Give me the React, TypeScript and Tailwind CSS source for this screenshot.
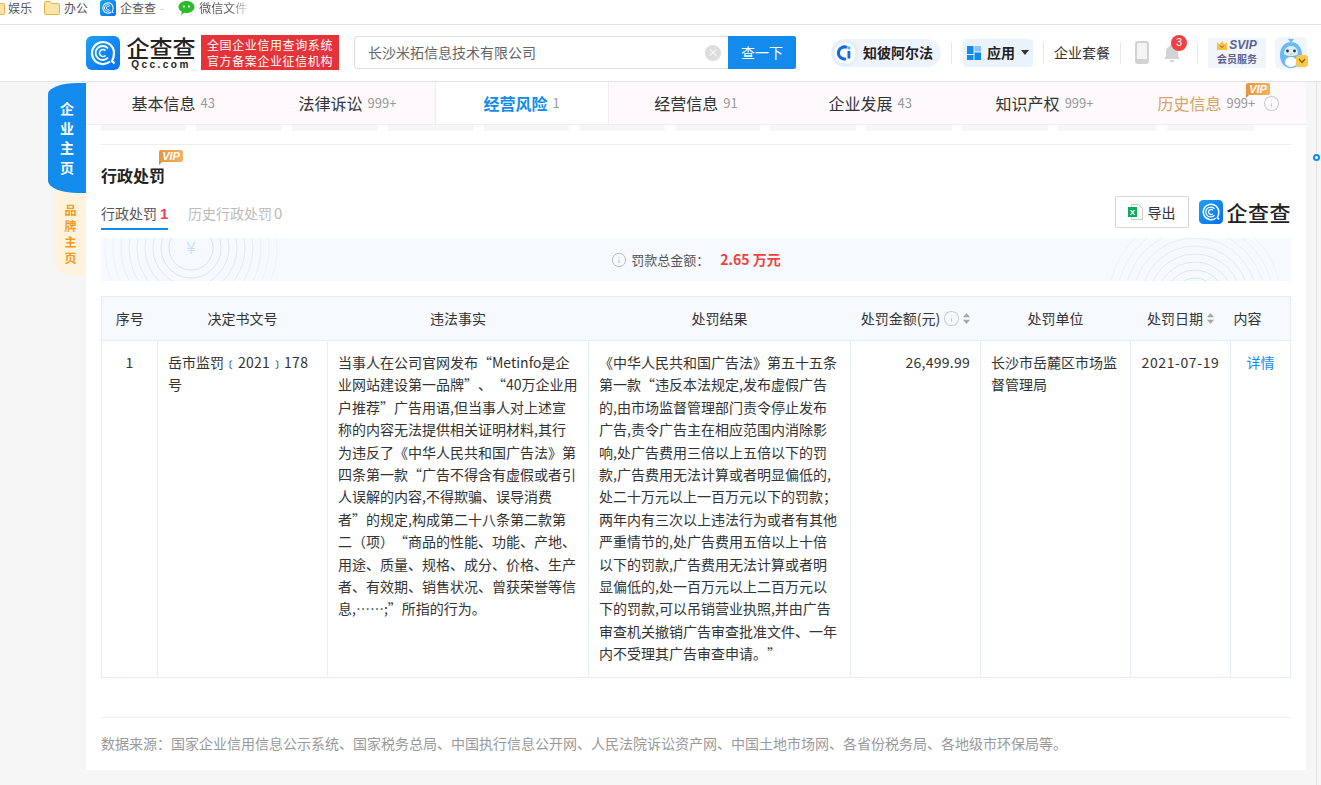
import React from 'react'
import { Info } from 'lucide-react'

const tabs = [
  { name: '基本信息', count: '43' },
  { name: '法律诉讼', count: '999+' },
  { name: '经营风险', count: '1', active: true },
  { name: '经营信息', count: '91' },
  { name: '企业发展', count: '43' },
  { name: '知识产权', count: '999+' },
  { name: '历史信息', count: '999+', vip: true },
]

const stubWidths = [85, 86, 86, 86, 85, 86, 85, 86, 86, 86, 99, 87]

const factText =
  '当事人在公司官网发布“Metinfo是企业网站建设第一品牌”、“40万企业用户推荐”广告用语,但当事人对上述宣称的内容无法提供相关证明材料,其行为违反了《中华人民共和国广告法》第四条第一款“广告不得含有虚假或者引人误解的内容,不得欺骗、误导消费者”的规定,构成第二十八条第二款第二（项）“商品的性能、功能、产地、用途、质量、规格、成分、价格、生产者、有效期、销售状况、曾获荣誉等信息,……;”所指的行为。'

const resultText =
  '《中华人民共和国广告法》第五十五条第一款“违反本法规定,发布虚假广告的,由市场监督管理部门责令停止发布广告,责令广告主在相应范围内消除影响,处广告费用三倍以上五倍以下的罚款,广告费用无法计算或者明显偏低的,处二十万元以上一百万元以下的罚款；两年内有三次以上违法行为或者有其他严重情节的,处广告费用五倍以上十倍以下的罚款,广告费用无法计算或者明显偏低的,处一百万元以上二百万元以下的罚款,可以吊销营业执照,并由广告审查机关撤销广告审查批准文件、一年内不受理其广告审查申请。”'

const QccIcon = ({ size }: { size: number }) => (
  <svg width={size} height={size} viewBox="0 0 34 34" className="shrink-0">
    <defs>
      <linearGradient id="qcc" x1="0" y1="0" x2="1" y2="1">
        <stop offset="0" stopColor="#1aa3f5" />
        <stop offset="1" stopColor="#0a6ff0" />
      </linearGradient>
    </defs>
    <rect width="34" height="34" rx="6" fill="url(#qcc)" />
    <path d="M24 25.5A11 11 0 1 1 28 17c0 4-1 6.5-2 8l2.5 2.5" fill="none" stroke="#fff" strokeWidth="2.2" />
    <path d="M22 21.500A7 7 0 1 1 22 12.500" fill="none" stroke="#fff" strokeWidth="1.8" />
    <path d="M19.500 19.500A3.500 3.500 0 1 1 19.500 14.500" fill="none" stroke="#fff" strokeWidth="1.6" />
  </svg>
)

const Folder = () => (
  <svg width="16" height="14" viewBox="0 0 16 14" className="shrink-0">
    <path d="M.5 2A1.500 1.500 0 0 1 2 .5h4L7.500 2.500H14A1.500 1.500 0 0 1 15.500 4v8A1.500 1.500 0 0 1 14 13.500H2A1.500 1.500 0 0 1 .5 12Z" fill="#ffe6a8" stroke="#e8b04a" />
  </svg>
)

const WeChat = () => (
  <svg width="17" height="16" viewBox="0 0 17 16" className="shrink-0">
    <path d="M8.500 1C4 1 .5 3.700.5 7c0 2 1.300 3.700 3.200 4.800L3.200 15l3.100-2.200c.7.100 1.400.2 2.200.2 4.500 0 8-2.700 8-6s-3.500-6-8-6Z" fill="#2dbb2d" />
    <circle cx="6" cy="6.500" r="1.100" fill="#fff" />
    <circle cx="11" cy="6.500" r="1.100" fill="#fff" />
  </svg>
)

const VipTag = () => (
  <span className="relative flex h-[12px] w-[24px] items-center justify-center rounded-[2px] rounded-bl-none bg-gradient-to-r from-[#e8963a] to-[#f4b163] font-['Liberation_Sans',sans-serif] text-[11px] font-bold italic leading-none text-white">
    VIP
    <span className="absolute left-0 top-full h-0 w-0 border-r-[3px] border-t-[3px] border-r-transparent border-t-[#d98730]" />
  </span>
)

const SortArrows = () => (
  <svg width="7" height="11" viewBox="0 0 7 11" className="shrink-0">
    <path d="M3.500 0 7 4.300H0Z" fill="#a8a8a8" />
    <path d="M3.500 11 0 6.700h7Z" fill="#a8a8a8" />
  </svg>
)

const Rings = ({ className, yen }: { className: string; yen?: boolean }) => (
  <svg viewBox="0 0 180 180" width="180" height="180" className={className}>
    {[22, 30, 38, 46, 54, 62, 70, 78, 86].map((r) => (
      <circle key={r} cx="90" cy="90" r={r} fill="none" stroke="#d5e4f9" strokeWidth="1" opacity={1.25 - r / 90} />
    ))}
    {yen && (
      <text x="90" y="96" fontSize="16" fill="#cfe0f8" textAnchor="middle" fontFamily="Liberation Sans">¥</text>
    )}
  </svg>
)

const Divider = ({ className }: { className: string }) => (
  <span className={`h-[22px] w-px shrink-0 bg-[#e8e8e8] ${className}`} />
)

export default function App() {
  return (
    <div className="relative h-[785px] w-[1321px] overflow-hidden bg-[#f6f6f6] font-['Noto_Sans_CJK_SC','Liberation_Sans',sans-serif] text-[14px] text-[#333] [text-spacing-trim:space-all]">
      {/* bookmarks bar */}
      <div className="box-border flex h-[25px] items-center overflow-hidden border-b border-[#e4e4e4] bg-white pb-[8px] text-[12px] text-[#555]">
        <div className="ml-[-11px] flex items-center gap-[3px]">
          <Folder />
          <span>娱乐</span>
        </div>
        <div className="ml-[12px] flex items-center gap-[4px]">
          <Folder />
          <span>办公</span>
        </div>
        <div className="ml-[12px] flex items-center gap-[4px]">
          <QccIcon size={16} />
          <span>企查查</span>
          <span className="text-[#ccc]">-</span>
        </div>
        <div className="ml-[14px] flex items-center gap-[4px]">
          <WeChat />
          <span className="bg-gradient-to-r from-[#555] from-60% to-[#ddd] bg-clip-text text-transparent">微信文件</span>
        </div>
      </div>

      {/* header */}
      <header className="box-border flex h-[57px] items-center border-b border-[#e4e4e4] bg-white pb-[1px] pl-[86px]">
        <QccIcon size={34} />
        <div className="ml-[6px] flex w-[70px] flex-col items-center">
          <span className="whitespace-nowrap text-[23px] font-medium leading-[24px] text-[#222]">企查查</span>
          <span className="whitespace-nowrap font-['Liberation_Sans',sans-serif] text-[10px] font-bold leading-[11px] tracking-[2.5px] text-[#222]">Qcc.com</span>
        </div>
        <div className="ml-[5px] flex h-[35px] w-[138px] flex-col items-center justify-center bg-[#e5333a] text-[12px] leading-[16px] tracking-[0.6px] text-white">
          <span>全国企业信用查询系统</span>
          <span>官方备案企业征信机构</span>
        </div>
        <div className="ml-[15px] flex h-[33px] w-[442px]">
          <div className="flex flex-1 items-center justify-between rounded-l-[4px] border border-r-0 border-[#ddd] pl-[13px] pr-[7px] text-[#666]">
            <span>长沙米拓信息技术有限公司</span>
            <span className="flex h-[16px] w-[16px] items-center justify-center rounded-full bg-[#ddd] text-[11px] leading-none text-white">×</span>
          </div>
          <button className="w-[68px] rounded-r-[2px] bg-[#128bed] text-white">查一下</button>
        </div>
        <div className="ml-[35px] flex h-[28px] w-[110px] items-center rounded-full bg-[#eef4fd]">
          <svg width="28" height="28" viewBox="0 0 28 28" className="shrink-0">
            <circle cx="14" cy="14" r="13.500" fill="#e4eefc" />
            <circle cx="14" cy="14" r="10.500" fill="#fff" />
            <path d="M16 8.500A6 6 0 1 0 15 19.700" fill="none" stroke="#1268e8" strokeWidth="3" />
            <rect x="16.500" y="12" width="2.800" height="7.500" fill="#1268e8" />
            <rect x="16.500" y="7.500" width="2.800" height="3" fill="#29c3ee" />
          </svg>
          <span className="ml-[4px] text-[14px] font-bold text-[#222]">知彼阿尔法</span>
        </div>
        <Divider className="ml-[10px]" />
        <div className="ml-[11px] flex h-[28px] w-[70px] items-center rounded-[4px] bg-[#eaf3fd] pl-[4px]">
          <svg width="14" height="14" viewBox="0 0 14 14" className="shrink-0">
            <rect width="6.500" height="8" fill="#128bed" />
            <rect x="7.500" width="6.500" height="5.500" fill="#128bed" opacity="0.45" />
            <rect y="9" width="6.500" height="5" fill="#128bed" />
            <rect x="7.500" y="6.500" width="6.500" height="7.500" fill="#128bed" />
          </svg>
          <span className="ml-[6px] text-[14px] font-bold text-[#222]">应用</span>
          <span className="ml-[6px] h-0 w-0 border-x-[4px] border-t-[5px] border-x-transparent border-t-[#333]" />
        </div>
        <Divider className="ml-[10px]" />
        <span className="ml-[10px] text-[14px] text-[#333]">企业套餐</span>
        <Divider className="ml-[10px]" />
        <svg width="14" height="23" viewBox="0 0 14 23" className="ml-[14px] shrink-0">
          <rect x="1" y="1" width="12" height="21" rx="2" fill="#f4f4f4" stroke="#d2d2d2" strokeWidth="2" />
          <rect x="1" y="18" width="12" height="4" fill="#d2d2d2" />
        </svg>
        <div className="relative ml-[14px] h-[22px] w-[18px]">
          <svg width="18" height="20" viewBox="0 0 18 20" className="mt-[1px]">
            <path d="M9 1a2 2 0 0 1 2 2 6 6 0 0 1 4 6v4l2 3H1l2-3V9a6 6 0 0 1 4-6 2 2 0 0 1 2-2ZM6.500 17h5a2.500 2.500 0 0 1-5 0Z" fill="#d4d4d4" />
          </svg>
          <span className="absolute left-[8px] top-[-7px] flex h-[16px] w-[16px] items-center justify-center rounded-full bg-[#f04040] font-['Liberation_Sans',sans-serif] text-[11px] leading-none text-white">3</span>
        </div>
        <Divider className="ml-[16px]" />
        <div className="ml-[10px] flex h-[30px] w-[58px] flex-col items-center justify-center bg-[#f3f5fc] font-bold text-[#5c6191]">
          <span className="flex items-center gap-[2px] font-['Liberation_Sans',sans-serif] text-[12px] italic leading-[13px]">
            <svg width="10" height="9" viewBox="0 0 10 9">
              <path d="M0 1 2.500 3.500 5 0l2.500 3.500L10 1v8H0Z" fill="#f5c242" />
              <path d="M3 4.500 5 6.500 7 4.500" fill="none" stroke="#8a5a10" strokeWidth="1" />
            </svg>
            SVIP
          </span>
          <span className="text-[10px] leading-[14px]">会员服务</span>
        </div>
        <div className="relative ml-[9px] h-[32px] w-[32px] rounded-[5px] bg-[#eef5fd]">
          <svg width="32" height="32" viewBox="0 0 32 32">
            <path d="M16 6 13 2h6ZM16 5c7 0 11 6 11 13 0 6-3 13-11 13S5 24 5 18C5 11 9 5 16 5Z" fill="#6cb9f5" />
            <path d="M16 9c4 0 7 3 7 7 0 2-3 3-7 3s-7-1-7-3c0-4 3-7 7-7Z" fill="#d8eefc" />
            <ellipse cx="16" cy="25" rx="6" ry="5" fill="#fff" />
            <circle cx="12.500" cy="14" r="1.400" fill="#234" />
            <circle cx="19.500" cy="14" r="1.400" fill="#234" />
            <path d="M14 16.500h4l-2 2Z" fill="#f5c242" />
          </svg>
          <span className="absolute bottom-[2px] right-[-1px] flex h-[12px] w-[12px] items-center justify-center rounded-[3px] bg-[#f7c948]">
            <svg width="8" height="6" viewBox="0 0 8 6">
              <path d="M1 1 4 4.500 7 1" fill="none" stroke="#8a5a10" strokeWidth="1.200" />
            </svg>
          </span>
        </div>
      </header>

      {/* left side tabs */}
      <div className="absolute left-[55px] top-[186px] flex h-[90px] w-[31px] flex-col items-center justify-end rounded-bl-[28px_10px] bg-[#fff3dd] pb-[10px] text-[12px] font-bold leading-[16px] text-[#f09c1b]">
        <span>品</span>
        <span>牌</span>
        <span>主</span>
        <span>页</span>
      </div>
      <div className="absolute left-[48px] top-[83px] flex h-[110px] w-[38px] flex-col items-center justify-center rounded-bl-[30px_12px] rounded-tl-[30px_11px] bg-[#128bed] text-[14px] font-bold leading-[19.500px] text-white">
        <span>企</span>
        <span>业</span>
        <span>主</span>
        <span>页</span>
      </div>

      <main className="ml-[86px] h-[688px] w-[1220px] bg-white">
        {/* tabs */}
        <nav className="grid h-[43px] grid-cols-7 border-b border-[#eee] bg-[#fdf9fc]">
          {tabs.map((t) => (
            <div
              key={t.name}
              className={`relative flex items-center justify-center ${t.active ? 'border-x border-[#eee] bg-white text-[#128bed]' : ''}`}
            >
              <span className={`text-[16px] ${t.active ? 'font-bold' : ''} ${t.vip ? 'text-[#d6a36a]' : ''}`}>{t.name}</span>
              <span className="ml-[5px] text-[13px] text-[#999]">{t.count}</span>
              {t.vip && (
                <>
                  <Info size={17} strokeWidth={1.5} className="ml-[8px] text-[#ccc]" />
                  <span className="absolute right-[36px] top-[1px]">
                    <VipTag />
                  </span>
                </>
              )}
            </div>
          ))}
        </nav>

        <div className="px-[15px]">
          <div className="flex h-[6px] gap-[10px]">
            {stubWidths.map((w, i) => (
              <span key={i} className="h-[6px] bg-[#f6f6f6]" style={{ width: w }} />
            ))}
          </div>
          <div className="mt-[13px] border-t border-[#eee]" />

          {/* section title */}
          <div className="relative mt-[19px] h-[22px] text-[16px] font-bold leading-[22px] text-[#222]">
            行政处罚
            <span className="absolute left-[58px] top-[-14px]">
              <VipTag />
            </span>
          </div>

          {/* sub tabs */}
          <div className="mt-[17px] flex h-[35px] items-start justify-between">
            <div className="flex">
              <div className="h-[27px] w-[67px] whitespace-nowrap border-b-2 border-[#128bed] leading-[20px] text-[#555]">
                行政处罚<span className="ml-[3px] font-['Liberation_Sans',sans-serif] text-[15px] font-bold text-[#f04060]">1</span>
              </div>
              <div className="ml-[20px] whitespace-nowrap leading-[20px] text-[#bbb]">
                历史行政处罚<span className="ml-[2px] text-[15px]">0</span>
              </div>
            </div>
            <div className="mt-[-7px] flex items-center">
              <button className="flex h-[32px] w-[74px] items-center justify-center gap-[5px] rounded-[2px] border border-[#d6d6d6] text-[14px]">
                <svg width="15" height="16" viewBox="0 0 15 16">
                  <path d="M3.500.5h7l4 4v11h-11Z" fill="#fff" stroke="#ccc" />
                  <rect y="3" width="9" height="10" fill="#10a860" />
                  <text x="4.500" y="11" fontSize="8" fontWeight="700" fill="#fff" textAnchor="middle" fontFamily="Liberation Sans">X</text>
                </svg>
                导出
              </button>
              <span className="ml-[10px] flex items-center">
                <QccIcon size={24} />
                <span className="ml-[4px] whitespace-nowrap text-[21px] font-medium leading-none tracking-[0.5px] text-[#222]">企查查</span>
              </span>
            </div>
          </div>

          {/* fine total */}
          <div className="relative flex h-[43px] items-center justify-center overflow-hidden bg-[#f6f9fe]">
            <Rings yen className="absolute left-[0px] top-[-80px]" />
            <Rings className="absolute right-[6px] top-[-28px]" />
            <span className="relative flex items-center text-[13px] text-[#555]">
              <Info size={16} strokeWidth={1.5} className="mr-[4px] text-[#bbb]" />
              罚款总金额：
              <span className="ml-[11px] text-[14px] font-bold text-[#f04040]">2.65 万元</span>
            </span>
          </div>

          {/* table */}
          <table className="mt-[15px] w-[1189px] table-fixed border-collapse border border-[#e4eef6] leading-[22.400px]">
            <colgroup>
              <col className="w-[56px]" />
              <col className="w-[170px]" />
              <col className="w-[261px]" />
              <col className="w-[262px]" />
              <col className="w-[130px]" />
              <col className="w-[150px]" />
              <col className="w-[100px]" />
              <col className="w-[60px]" />
            </colgroup>
            <thead>
              <tr className="h-[44px] bg-[#f6f9fd] text-center [&>th]:border-y [&>th]:border-[#e4eef6] [&>th]:font-normal">
                <th>序号</th>
                <th>决定书文号</th>
                <th>违法事实</th>
                <th>处罚结果</th>
                <th>
                  <span className="flex items-center justify-center gap-[3px]">
                    处罚金额(元)
                    <Info size={17} strokeWidth={1.5} className="text-[#ccc]" />
                    <SortArrows />
                  </span>
                </th>
                <th>处罚单位</th>
                <th>
                  <span className="flex items-center justify-center gap-[4px]">
                    处罚日期
                    <SortArrows />
                  </span>
                </th>
                <th className="pl-[3px] text-left">内容</th>
              </tr>
            </thead>
            <tbody>
              <tr className="[&>td]:border [&>td]:border-[#e4eef6] [&>td]:px-[10px] [&>td]:pb-[12px] [&>td]:pt-[10px] [&>td]:align-top">
                <td className="text-center">1</td>
                <td>
                  岳市监罚﹝<span className="tracking-[0.25px]">2021</span>﹞<span className="tracking-[0.25px]">178</span>号
                </td>
                <td>{factText}</td>
                <td>{resultText}</td>
                <td className="text-right tracking-[0.25px]">26,499.99</td>
                <td>长沙市岳麓区市场监督管理局</td>
                <td className="text-center tracking-[0.6px]">2021-07-19</td>
                <td className="text-center text-[#128bed]">详情</td>
              </tr>
            </tbody>
          </table>

          {/* data source */}
          <div className="mt-[39px] flex h-[53px] items-center border-t border-[#eee] text-[#999]">
            数据来源：国家企业信用信息公示系统、国家税务总局、中国执行信息公开网、人民法院诉讼资产网、中国土地市场网、各省份税务局、各地级市环保局等。
          </div>
        </div>
      </main>

      {/* right rail marker */}
      <span className="absolute bottom-0 left-[1316px] top-[82px] w-px bg-[#e4e4e4]" />
      <span className="absolute left-[1313px] top-[154px] h-[7px] w-[7px] rounded-full border-2 border-[#128bed] bg-white" />
    </div>
  )
}
